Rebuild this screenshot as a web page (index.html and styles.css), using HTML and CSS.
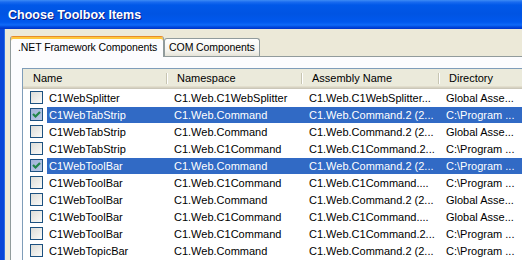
FILE: index.html
```html
<!DOCTYPE html>
<html>
<head>
  <title>Choose Toolbox Items</title>
  <link rel="stylesheet" href="styles.css">
</head>
<body>
  <div class="window">
    <div class="titlebar">Choose Toolbox Items</div>
    <div class="frame">
      <div class="tabs">
        <div class="tab active">.NET Framework Components</div>
        <div class="tab">COM Components</div>
      </div>
      <div class="panel">
        <div class="list">
          <div class="header">
            <div class="hcell">Name</div>
            <div class="hcell">Namespace</div>
            <div class="hcell">Assembly Name</div>
            <div class="hcell">Directory</div>
          </div>

          <div class="row">
            <div class="check"><span class="box"></span></div>
            <div class="cell first">C1WebSplitter</div>
            <div class="cell">C1.Web.C1WebSplitter</div>
            <div class="cell">C1.Web.C1WebSplitter...</div>
            <div class="cell">Global Asse...</div>
          </div>
          <div class="row selected">
            <div class="check"><span class="box checked"><svg width="11" height="11" viewBox="0 0 11 11"><polyline points="2,5 4.5,7.5 9,3" fill="none" stroke="#21864a" stroke-width="2.2"/></svg></span></div>
            <div class="cell first">C1WebTabStrip</div>
            <div class="cell">C1.Web.Command</div>
            <div class="cell">C1.Web.Command.2 (2...</div>
            <div class="cell">C:\Program ...</div>
          </div>
          <div class="row">
            <div class="check"><span class="box"></span></div>
            <div class="cell first">C1WebTabStrip</div>
            <div class="cell">C1.Web.Command</div>
            <div class="cell">C1.Web.Command.2 (2...</div>
            <div class="cell">Global Asse...</div>
          </div>
          <div class="row">
            <div class="check"><span class="box"></span></div>
            <div class="cell first">C1WebTabStrip</div>
            <div class="cell">C1.Web.C1Command</div>
            <div class="cell">C1.Web.C1Command.2...</div>
            <div class="cell">C:\Program ...</div>
          </div>
          <div class="row selected">
            <div class="check"><span class="box checked"><svg width="11" height="11" viewBox="0 0 11 11"><polyline points="2,5 4.5,7.5 9,3" fill="none" stroke="#21864a" stroke-width="2.2"/></svg></span></div>
            <div class="cell first">C1WebToolBar</div>
            <div class="cell">C1.Web.Command</div>
            <div class="cell">C1.Web.Command.2 (2...</div>
            <div class="cell">C:\Program ...</div>
          </div>
          <div class="row">
            <div class="check"><span class="box"></span></div>
            <div class="cell first">C1WebToolBar</div>
            <div class="cell">C1.Web.C1Command</div>
            <div class="cell">C1.Web.C1Command....</div>
            <div class="cell">C:\Program ...</div>
          </div>
          <div class="row">
            <div class="check"><span class="box"></span></div>
            <div class="cell first">C1WebToolBar</div>
            <div class="cell">C1.Web.Command</div>
            <div class="cell">C1.Web.Command.2 (2...</div>
            <div class="cell">Global Asse...</div>
          </div>
          <div class="row">
            <div class="check"><span class="box"></span></div>
            <div class="cell first">C1WebToolBar</div>
            <div class="cell">C1.Web.C1Command</div>
            <div class="cell">C1.Web.C1Command....</div>
            <div class="cell">Global Asse...</div>
          </div>
          <div class="row">
            <div class="check"><span class="box"></span></div>
            <div class="cell first">C1WebToolBar</div>
            <div class="cell">C1.Web.C1Command</div>
            <div class="cell">C1.Web.C1Command.2...</div>
            <div class="cell">C:\Program ...</div>
          </div>
          <div class="row">
            <div class="check"><span class="box"></span></div>
            <div class="cell first">C1WebTopicBar</div>
            <div class="cell">C1.Web.Command</div>
            <div class="cell">C1.Web.Command.2 (2...</div>
            <div class="cell">C:\Program ...</div>
          </div>
        </div>
      </div>
    </div>
  </div>
</body>
</html>
```

FILE: styles.css
```css
body{
    margin: 0;
    font-family: "Liberation Sans", Arial, sans-serif;
    font-size: 11px;
    color: #000;
}

.window{
    width: 522px;
    height: 260px;
    overflow: hidden;
}

.titlebar{
    height: 29px;
    line-height: 30px;
    padding-left: 8px;
    color: #fff;
    font-weight: bold;
    font-size: 12.5px;
    text-shadow: 1px 1px #0a1883;
    background: linear-gradient(#3d8cf5 0px, #1a6cf0 2px, #0058e8 5px, #0054e3 14px, #0058ee 22px, #0f6af8 25px, #0048dd 27px, #0033c8 29px);
}

.frame{
    background: #ece9d8;
    border-left: 4px solid #0846d8;
    box-shadow: inset 1px 0 #2b6ee8;
    padding: 6px 0 0 6px;
    height: 225px;
}

.tabs{
    display: flex;
    align-items: flex-end;
    height: 21px;
    font-size: 10.5px;
    letter-spacing: -0.1px;
}

.tab{
    height: 17px;
    line-height: 17px;
    padding: 0 4px;
    border: 1px solid #919b9c;
    border-bottom: none;
    border-radius: 3px 3px 0 0;
    background: linear-gradient(#ffffff, #f4f3ee 70%, #e5e3d8);
    white-space: nowrap;
}

.tab.active{
    position: relative;
    z-index: 1;
    height: 19px;
    line-height: 19px;
    padding: 1px 6px 0 7px;
    margin-bottom: -1px;
    border-top-color: #e68b2c;
    background: #fcfcfe;
    box-shadow: inset 0 2px #ffc83c;
}

.panel{
    background: #fcfcfe;
    border: 1px solid #919b9c;
    border-right: none;
    padding: 11px 0 0 11px;
    height: 200px;
}

.list{
    background: #fff;
    border: 1px solid #7f9db9;
    border-right: none;
    height: 200px;
    overflow: hidden;
}

.header{
    display: grid;
    grid-template-columns: 144px 135px 137px 200px;
    height: 20px;
    background: #ebeadb;
    box-shadow: inset 0 -1px #cbc7b8, inset 0 -2px #d6d2c2, inset 0 -3px #e2decd;
}

.hcell{
    position: relative;
    line-height: 19px;
    padding-left: 10px;
    white-space: nowrap;
}

.hcell::after{
    content: "";
    position: absolute;
    right: 0;
    top: 4px;
    bottom: 5px;
    width: 1px;
    background: #c7c5b2;
    box-shadow: 1px 0 #fff;
}

.row{
    display: grid;
    grid-template-columns: 24px 120px 135px 137px 200px;
    height: 17px;
}

.check{
    display: flex;
    align-items: center;
    padding-left: 7px;
}

.box{
    display: flex;
    align-items: center;
    justify-content: center;
    width: 11px;
    height: 11px;
    border: 1px solid #1c5180;
    background: linear-gradient(135deg, #dcdcd7, #fafaf8);
}

.box.checked{
    background: linear-gradient(135deg, #9fb3d8, #b8c8e6);
}

.cell{
    line-height: 16px;
    margin-top: 1px;
    padding-left: 7px;
    white-space: nowrap;
    overflow: hidden;
}

.cell.first{
    padding-left: 2px;
}

.selected .cell{
    background: #316ac5;
    color: #fff;
}
```
